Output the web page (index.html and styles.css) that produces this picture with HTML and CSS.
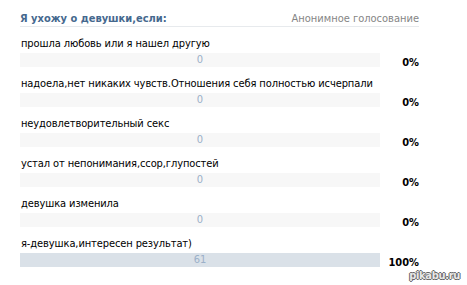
FILE: index.html
```html
<!DOCTYPE html>
<html lang="ru">
<head>
    <meta charset="UTF-8">
    <title>Опрос</title>
<link rel="stylesheet" href="styles.css">
</head>

<body>
    <div class="poll">
        <div class="poll-head">
            <span class="poll-title">Я ухожу о девушки,если:</span>
            <span class="poll-type">Анонимное голосование</span>
        </div>

        <div class="option">
            <div class="option-label">прошла любовь или я нашел другую</div>
            <div class="option-row">
                <div class="bar"><div class="bar-count">0</div></div>
                <div class="percent">0%</div>
            </div>
        </div>

        <div class="option">
            <div class="option-label">надоела,нет никаких чувств.Отношения себя полностью исчерпали</div>
            <div class="option-row">
                <div class="bar"><div class="bar-count">0</div></div>
                <div class="percent">0%</div>
            </div>
        </div>

        <div class="option">
            <div class="option-label">неудовлетворительный секс</div>
            <div class="option-row">
                <div class="bar"><div class="bar-count">0</div></div>
                <div class="percent">0%</div>
            </div>
        </div>

        <div class="option">
            <div class="option-label">устал от непонимания,ссор,глупостей</div>
            <div class="option-row">
                <div class="bar"><div class="bar-count">0</div></div>
                <div class="percent">0%</div>
            </div>
        </div>

        <div class="option">
            <div class="option-label">девушка изменила</div>
            <div class="option-row">
                <div class="bar"><div class="bar-count">0</div></div>
                <div class="percent">0%</div>
            </div>
        </div>

        <div class="option">
            <div class="option-label">я-девушка,интересен результат)</div>
            <div class="option-row">
                <div class="bar full"><div class="bar-count">61</div></div>
                <div class="percent">100%</div>
            </div>
        </div>
    </div>

    <div class="watermark">pikabu.ru</div>
</body>
</html>
```

FILE: styles.css
```css
body {
    margin: 0;
    padding: 0;
    font-family: 'DejaVu Sans Condensed', 'DejaVu Sans', sans-serif;
    font-size: 11px;
    background-color: #fff;
    color: #000;
}

.poll {
    width: 399px;
    padding: 12px 0 0 20px;
}

.poll-head {
    display: flex;
    justify-content: space-between;
    line-height: 14px;
    padding-bottom: 0;
    border-bottom: 1px solid #e7eaed;
    margin-bottom: 10px;
}

.poll-title {
    font-weight: bold;
    color: #45688e;
}

.poll-type {
    color: #858585;
}

.option {
    margin-bottom: 7px;
}

.option-label {
    line-height: 14px;
    padding-left: 1px;
    margin-bottom: 2px;
    letter-spacing: -0.1px;
}

.option-row {
    display: flex;
}

.bar {
    width: 360px;
    height: 14px;
    background-color: #f7f7f7;
}

.bar.full {
    background-color: #dae1e8;
}

.bar-count {
    text-align: center;
    line-height: 14px;
    color: #9bb0c8;
}

.percent {
    flex: 1;
    text-align: right;
    font-weight: bold;
    line-height: 14px;
    padding-top: 3px;
}

.watermark {
    position: absolute;
    right: 7px;
    bottom: 3px;
    font-family: 'DejaVu Sans Condensed', sans-serif;
    font-size: 11px;
    font-weight: bold;
    letter-spacing: -0.3px;
    color: #e8e8e8;
    text-shadow: 1px 0 0 #666, -1px 0 0 #666, 0 1px 0 #666, 0 -1px 0 #666;
}
```
